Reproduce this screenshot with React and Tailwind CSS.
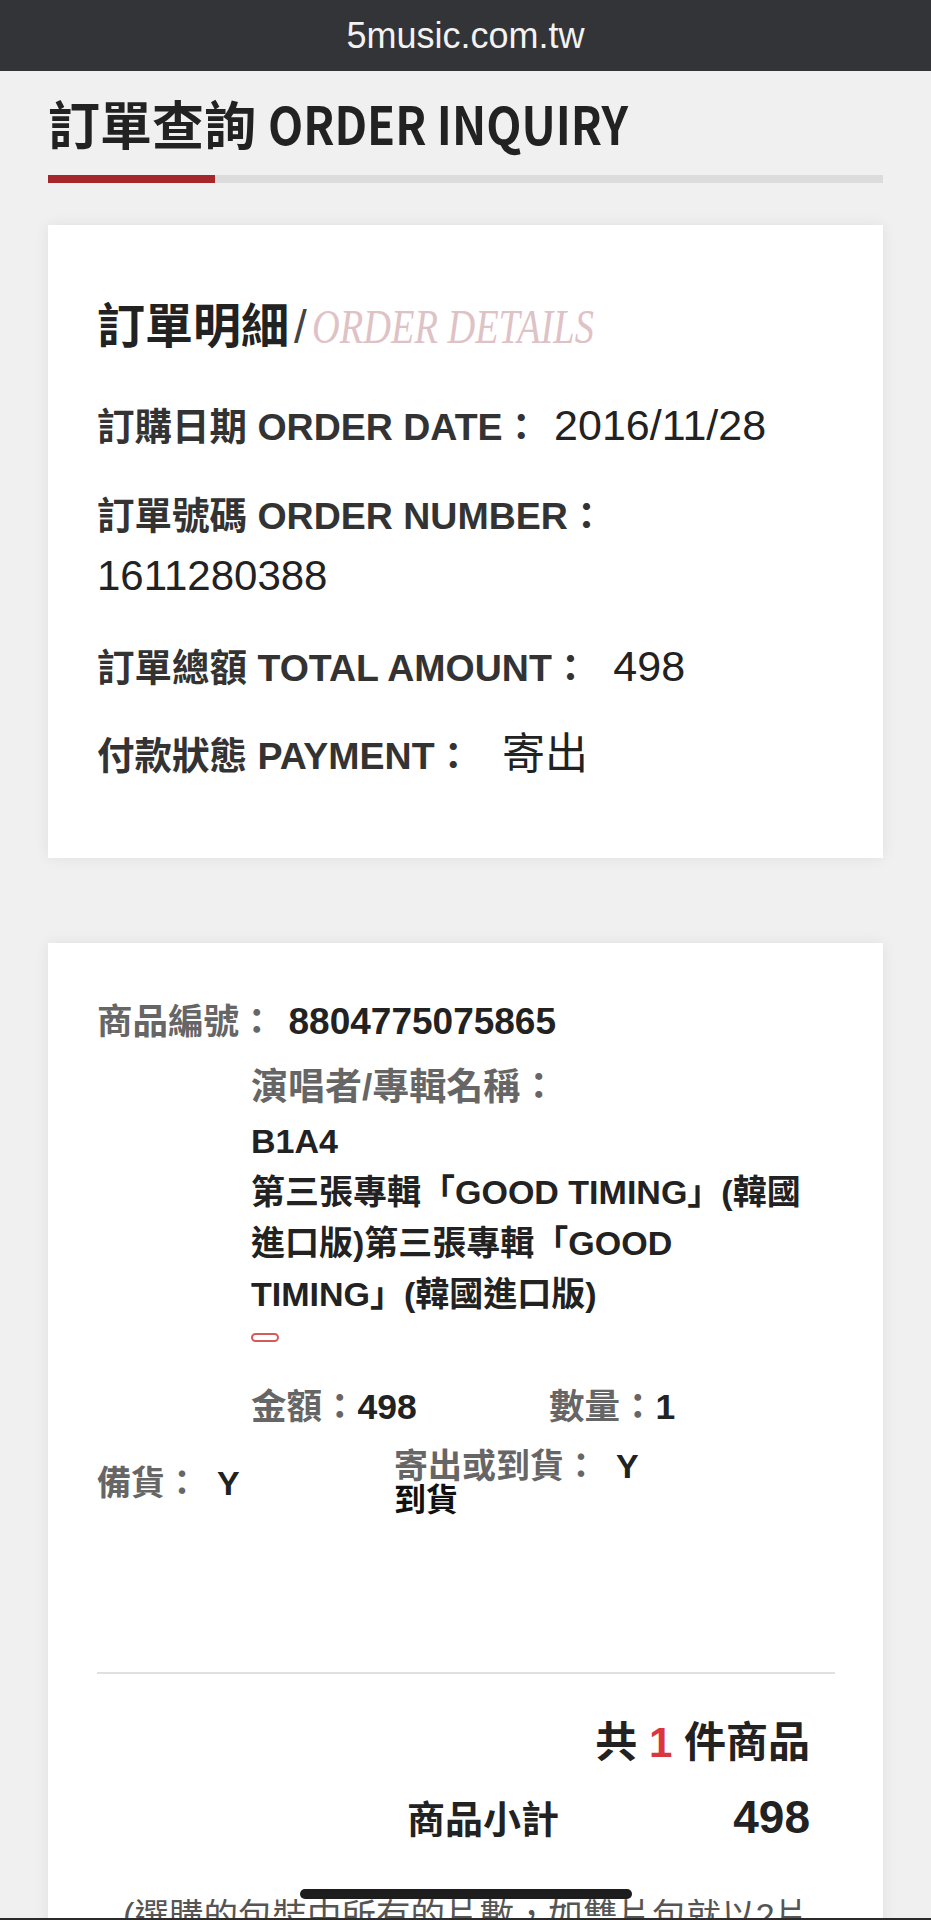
import React from 'react';

const OrderRow = ({ label, value, gap = 'ml-[14px]' }) => (
    <p className="leading-[61px]">
        <span className="text-[37.5px] font-semibold text-[#333]">{label}</span>
        <span className={`${gap} text-[43px] font-normal leading-none text-[#222]`}>{value}</span>
    </p>
);

const App = () => {
    return (
        <div className="relative h-[1920px] overflow-hidden bg-[#f0f0f0] font-['Liberation_Sans','Noto_Sans_CJK_TC',sans-serif] text-[#222]">
            {/* browser address bar */}
            <div className="flex h-[71px] items-center justify-center bg-[#323437] text-[36px] text-[#f2f2f2]">
                5music.com.tw
            </div>

            <div className="px-[48px]">
                <h1 className="mt-[22px] font-['Noto_Sans_CJK_TC',sans-serif] text-[52px] font-bold leading-[60px] text-[#222]">
                    訂單查詢{' '}
                    <span className="inline-block origin-left scale-x-[0.88]">ORDER INQUIRY</span>
                </h1>
                <div className="mt-[22px] flex h-[8px] bg-[#dcdcdc]">
                    <div className="w-[167px] bg-[#a5262b]" />
                </div>

                {/* order details */}
                <div className="mt-[42px] bg-white pb-[64px] pl-[49px] pr-[40px] pt-[67px] shadow-[0_0_14px_rgba(0,0,0,0.07)]">
                    <div className="flex items-baseline leading-[60px]">
                        <span className="font-['Noto_Sans_CJK_TC',sans-serif] text-[48px] font-bold text-[#222]">訂單明細</span>
                        <span className="mx-[5px] text-[46px] font-light text-[#444]">/</span>
                        <span className="inline-block origin-left scale-x-[0.8] font-['Liberation_Serif',serif] text-[48px] italic text-[#dfc2c6]">
                            ORDER DETAILS
                        </span>
                    </div>

                    <div className="mt-[40px]">
                        <OrderRow label="訂購日期 ORDER DATE：" value="2016/11/28" />
                        <p className="mt-[21px] leading-[61px]">
                            <span className="text-[37.5px] font-semibold text-[#333]">訂單號碼 ORDER NUMBER：</span>
                            <br />
                            <span className="text-[42px] font-normal leading-none text-[#222]">1611280388</span>
                        </p>
                        <div className="mt-[23px]">
                            <OrderRow label="訂單總額 TOTAL AMOUNT：" value="498" gap="ml-[24px]" />
                        </div>
                        <div className="mt-[20px]">
                            <OrderRow label="付款狀態 PAYMENT：" value="寄出" gap="ml-[30px]" />
                        </div>
                    </div>
                </div>

                {/* product */}
                <div className="mt-[85px] bg-white pb-[40px] pl-[49px] pr-[48px] pt-[54px] shadow-[0_0_14px_rgba(0,0,0,0.07)]">
                    <div className="flex items-baseline font-semibold leading-[50px]">
                        <span className="text-[35.5px] text-[#666]">商品編號：</span>
                        <span className="ml-[14px] text-[37px] text-[#222]">8804775075865</span>
                    </div>

                    <div className="pl-[154px]">
                        <div className="mt-[16px] text-[37px] font-semibold leading-[50px] text-[#666]">演唱者/專輯名稱：</div>
                        <div className="mt-[3px] text-[34px] font-semibold leading-[51px] text-[#222]">
                            B1A4
                            <br />
                            第三張專輯「GOOD TIMING」(韓國
                            <br />
                            進口版)第三張專輯「GOOD
                            <br />
                            TIMING」(韓國進口版)
                        </div>
                        <div className="mt-[13px] h-[9px] w-[28px] rounded-full border-2 border-[#d65a5a]" />
                        <div className="mt-[40px] flex text-[35.5px] font-semibold leading-[50px]">
                            <div className="w-[298px]">
                                <span className="text-[#666]">金額：</span>
                                <span className="text-[#222]">498</span>
                            </div>
                            <div>
                                <span className="text-[#666]">數量：</span>
                                <span className="text-[#222]">1</span>
                            </div>
                        </div>
                    </div>

                    <div className="mt-[17px] flex items-center font-semibold">
                        <div className="w-[297px] text-[34px] leading-[50px]">
                            <span className="text-[#666]">備貨：</span>
                            <span className="ml-[18px] text-[#222]">Y</span>
                        </div>
                        <div className="leading-[34px]">
                            <div className="text-[34px]">
                                <span className="text-[#666]">寄出或到貨：</span>
                                <span className="ml-[18px] text-[#222]">Y</span>
                            </div>
                            <div className="text-[32px] font-bold text-[#111]">到貨</div>
                        </div>
                    </div>

                    <div className="mt-[155px] h-[2px] bg-[#e0e0e0]" />

                    <div className="mt-[44px] pr-[25px] text-right text-[42px] font-bold leading-[50px] text-[#222]">
                        共 <span className="text-[#d9363e]">1</span> 件商品
                    </div>
                    <div className="mt-[24px] flex items-baseline justify-end pr-[25px] font-bold leading-[50px] text-[#222]">
                        <span className="text-[38px]">商品小計</span>
                        <span className="w-[251px] text-right text-[46px]">498</span>
                    </div>
                    <div className="mt-[46px] text-center text-[34.5px] leading-[50px] text-[#555]">
                        (選購的包裝中所有的片數，如雙片包就以2片
                        <br />
                        計算)
                    </div>
                </div>
            </div>

            {/* home indicator */}
            <div className="absolute left-[300px] top-[1889px] h-[10px] w-[332px] rounded-full bg-[#1d1d1d]" />
            <div className="absolute bottom-0 left-0 h-[2px] w-full bg-[#2a2a2a]" />
        </div>
    );
};

export default App;
